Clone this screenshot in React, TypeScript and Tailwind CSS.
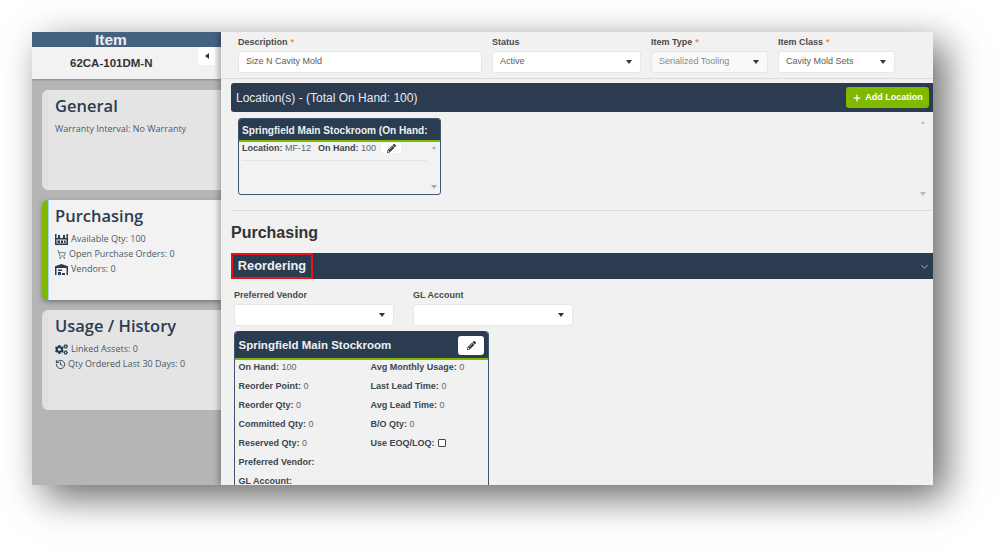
import { History, Plus, ShoppingCart } from 'lucide-react';
import { FaCogs, FaPencilAlt } from 'react-icons/fa';

const NAVY = 'bg-[#2b3c50]';

function Caret({ color = 'border-t-[#333]' }: { color?: string }) {
  return <span className={`h-0 w-0 border-x-[3px] border-t-[4px] border-x-transparent ${color}`} />;
}

function Label({ text, required, className = '' }: { text: string; required?: boolean; className?: string }) {
  return (
    <div className={`h-[19px] text-[9px] leading-[21px] font-bold text-[#4a4a4a] ${className}`}>
      {text}
      {required && <span className="ml-[3px] text-[#f08a3c]">*</span>}
    </div>
  );
}

function Field({ value, caret, muted, className = '' }: { value: string; caret?: boolean; muted?: boolean; className?: string }) {
  return (
    <div
      className={`flex h-[22px] items-center justify-between rounded-[3px] border border-[#e6e6e6] pr-[8px] pl-[7px] text-[9px] ${
        muted ? 'bg-[#f9f9f9] text-[#8a8a8a]' : 'bg-white text-[#5c5c5c]'
      } ${className}`}
    >
      <span>{value}</span>
      {caret && <Caret />}
    </div>
  );
}

function SideCard({ title, active, children }: { title: string; active?: boolean; children?: React.ReactNode }) {
  return (
    <div
      className={`ml-[10px] h-[100px] rounded-l-[6px] pl-[7px] font-['Open_Sans',sans-serif] text-[#2b3c50] ${
        active
          ? 'border-l-[6px] border-[#7fba00] bg-[#f2f2f2] shadow-[inset_1px_0_0_#a8d4f0,0_2px_5px_rgba(0,0,0,0.35)]'
          : 'border-l-[6px] border-[#e0e0e0] bg-[#e4e4e4]'
      }`}
    >
      <div className="pt-[3px] text-[16.500px] leading-[26px] font-semibold">{title}</div>
      <div className="mt-[3px] flex flex-col gap-[1px] text-[9px] leading-[14px] text-[#4c5a68]">{children}</div>
    </div>
  );
}

function StockIcon() {
  return (
    <svg width="13" height="11" viewBox="0 0 13 11" fill="#2b3c50">
      <path d="M0 0h1.500v4H3V1h2v3h3V1h2v3h1.500V0H13v11H0z" />
      <path d="M1.500 5.500h10V9.500h-10z" fill="#e8e8e8" />
      <path d="M2.500 6.500h2.500v2.500H2.500zM6 6.500h2v2.500H6zM9 6.500h1.500v2.500H9z" />
    </svg>
  );
}

function VendorIcon() {
  return (
    <svg width="13" height="11" viewBox="0 0 13 11" fill="#2b3c50">
      <path d="M6.500 0L13 2.200V11h-1.500V4H1.500v7H0V2.200z" />
      <path d="M3 5.500h4v1.500H3zM3 8h3v3H3zM7 9h3v2H7z" />
    </svg>
  );
}

function Stat({ name, value }: { name: string; value?: string }) {
  return (
    <div className="h-[19px] text-[9px] leading-[15px] whitespace-nowrap text-[#5c6773]">
      <span className="font-bold text-[#3b4650]">{name}:</span> {value}
    </div>
  );
}

export default function App() {
  return (
    <div className="h-[550px] w-[998px] overflow-hidden bg-white pt-[32px] pl-[32px] font-['Liberation_Sans',Arial,sans-serif]">
      <div className="flex h-[453px] w-[901px] overflow-hidden shadow-[12px_12px_36px_rgba(0,0,0,0.6)]">
        {/* Sidebar */}
        <aside className="w-[189px] shrink-0 bg-[#b5b5b5]">
          <div className="h-[15px] bg-[#456182] pl-[63px] text-[15.500px] leading-[15px] font-bold text-[#e8eef4]">Item</div>
          <div className="flex h-[32px] items-start justify-between bg-[#f2f2f2] shadow-[0_1px_2px_rgba(0,0,0,0.25)]">
            <div className="pt-[8px] pl-[38px] text-[11.500px] leading-[16px] font-bold text-[#333]">62CA-101DM-N</div>
            <div className="mr-[6px] flex h-[18px] w-[17px] items-center justify-center rounded-[2px] bg-white">
              <span className="h-0 w-0 border-y-[3px] border-r-[4px] border-y-transparent border-r-[#333]" />
            </div>
          </div>
          <div className="flex flex-col gap-[10px] pt-[11px]">
            <SideCard title="General">
              <div>Warranty Interval: No Warranty</div>
            </SideCard>
            <SideCard title="Purchasing" active>
              <div className="flex items-center gap-[3px]">
                <StockIcon />
                Available Qty: 100
              </div>
              <div className="flex items-center gap-[3px] pl-[2px]">
                <ShoppingCart size={9} strokeWidth={2} />
                Open Purchase Orders: 0
              </div>
              <div className="flex items-center gap-[3px]">
                <VendorIcon />
                Vendors: 0
              </div>
            </SideCard>
            <SideCard title="Usage / History">
              <div className="flex items-center gap-[3px]">
                <FaCogs size={13} className="text-[#2b3c50]" />
                Linked Assets: 0
              </div>
              <div className="flex items-center gap-[2px]">
                <History size={11} strokeWidth={2} className="text-[#2b3c50]" />
                Qty Ordered Last 30 Days: 0
              </div>
            </SideCard>
          </div>
        </aside>

        {/* Main */}
        <main className="relative flex-1 bg-[#f1f1f1] shadow-[-3px_0_5px_rgba(0,0,0,0.25)]">
          <div className="flex h-[47px] gap-[10px] border-b border-[#dcdcdc] pl-[17px]">
            <div className="w-[244px]">
              <Label text="Description" required />
              <Field value="Size N Cavity Mold" />
            </div>
            <div className="w-[149px]">
              <Label text="Status" />
              <Field value="Active" caret />
            </div>
            <div className="w-[117px]">
              <Label text="Item Type" required />
              <Field value="Serialized Tooling" caret muted />
            </div>
            <div className="w-[117px]">
              <Label text="Item Class" required />
              <Field value="Cavity Mold Sets" caret />
            </div>
          </div>

          <div className="pl-[10px]">
            <div className={`mt-[4px] flex h-[29px] items-center justify-between rounded-l-[3px] pr-[4px] pl-[5px] ${NAVY}`}>
              <span className="text-[12px] text-[#e6ebf0]">Location(s) - (Total On Hand: 100)</span>
              <button className="flex h-[21px] w-[83px] items-center justify-center gap-[3px] rounded-[3px] bg-[#7fba00] text-[9px] font-bold text-white">
                <Plus size={10} strokeWidth={3} />
                Add Location
              </button>
            </div>

            {/* Location list */}
            <div className="flex h-[99px] justify-between border-b border-[#dcdcdc] pt-[6px] pr-[7px] pl-[7px]">
              <div className="h-[77px] w-[203px] overflow-hidden rounded-[3px] border-[1.5px] border-[#3f556d] bg-[#f2f2f2]">
                <div className={`h-[23px] border-b-[2px] border-[#7fba00] pl-[3px] text-[10.100px] leading-[23px] font-bold whitespace-nowrap text-[#eef1f4] ${NAVY}`}>
                  Springfield Main Stockroom (On Hand:
                </div>
                <div className="flex h-[51px] justify-between pr-[3px] pl-[3px]">
                  <div className="w-[185px]">
                    <div className="flex h-[19px] items-start gap-[7px] border-b border-[#e4e4e4] text-[9px] leading-[13px] text-[#5c6773]">
                      <span>
                        <b className="text-[#3b4650]">Location:</b> MF-12
                      </span>
                      <span>
                        <b className="text-[#3b4650]">On Hand:</b> 100
                      </span>
                      <span className="-ml-[2px] flex h-[10px] w-[20px] translate-y-[1px] items-center justify-center rounded-[2px] bg-white">
                        <FaPencilAlt size={9} className="text-[#333]" />
                      </span>
                    </div>
                  </div>
                  <div className="flex flex-col items-center justify-between py-[4px]">
                    <span className="h-0 w-0 border-x-[2.500px] border-b-[3px] border-x-transparent border-b-[#aaa]" />
                    <Caret color="border-t-[#aaa]" />
                  </div>
                </div>
              </div>
              <div className="flex h-[81px] flex-col items-center justify-between py-[3px]">
                <span className="h-0 w-0 border-x-[2.500px] border-b-[3px] border-x-transparent border-b-[#bbb]" />
                <Caret color="border-t-[#bbb]" />
              </div>
            </div>

            <h2 className="h-[42px] text-[16px] leading-[44px] font-bold text-[#333]">Purchasing</h2>

            <div className={`relative flex h-[26px] items-center justify-between pr-[6px] ${NAVY}`}>
              <span className="flex h-[26px] w-[82px] items-center justify-center border-2 border-[#e8141c] text-[12.800px] font-bold text-[#eef1f4]">
                Reordering
              </span>
              <span className="h-[5px] w-[5px] -translate-y-[1px] rotate-45 border-r border-b border-[#7f8c9a]" />
            </div>

            <div className="flex gap-[19px] pl-[3px]">
              <div className="w-[160px]">
                <Label text="Preferred Vendor" className="mt-[6px]" />
                <Field value="" caret />
              </div>
              <div className="w-[160px]">
                <Label text="GL Account" className="mt-[6px]" />
                <Field value="" caret />
              </div>
            </div>

            {/* Stockroom card */}
            <div className="mt-[5px] ml-[3px] h-[160px] w-[255px] rounded-t-[4px] border-x-[1.500px] border-[#3f556d]">
              <div className={`flex h-[29px] items-start justify-between rounded-t-[4px] border-b-[2px] border-[#7fba00] pt-[5px] pr-[4px] pl-[3.500px] ${NAVY}`}>
                <span className="mt-[1px] text-[11.500px] leading-[16px] font-bold text-[#eef1f4]">Springfield Main Stockroom</span>
                <span className="flex h-[19px] w-[26px] items-center justify-center rounded-[3px] bg-white">
                  <FaPencilAlt size={9} className="text-[#333]" />
                </span>
              </div>
              <div className="grid grid-cols-[132px_1fr] pl-[3.500px]">
                <div>
                  <Stat name="On Hand" value="100" />
                  <Stat name="Reorder Point" value="0" />
                  <Stat name="Reorder Qty" value="0" />
                  <Stat name="Committed Qty" value="0" />
                  <Stat name="Reserved Qty" value="0" />
                  <Stat name="Preferred Vendor" />
                  <Stat name="GL Account" />
                </div>
                <div>
                  <Stat name="Avg Monthly Usage" value="0" />
                  <Stat name="Last Lead Time" value="0" />
                  <Stat name="Avg Lead Time" value="0" />
                  <Stat name="B/O Qty" value="0" />
                  <div className="flex h-[19px] items-start gap-[3px] text-[9px] leading-[15px] font-bold text-[#3b4650]">
                    Use EOQ/LOQ:
                    <span className="mt-[3px] h-[8px] w-[8px] rounded-[1px] border border-[#3b4650] bg-white" />
                  </div>
                </div>
              </div>
            </div>
          </div>
        </main>
      </div>
    </div>
  );
}
